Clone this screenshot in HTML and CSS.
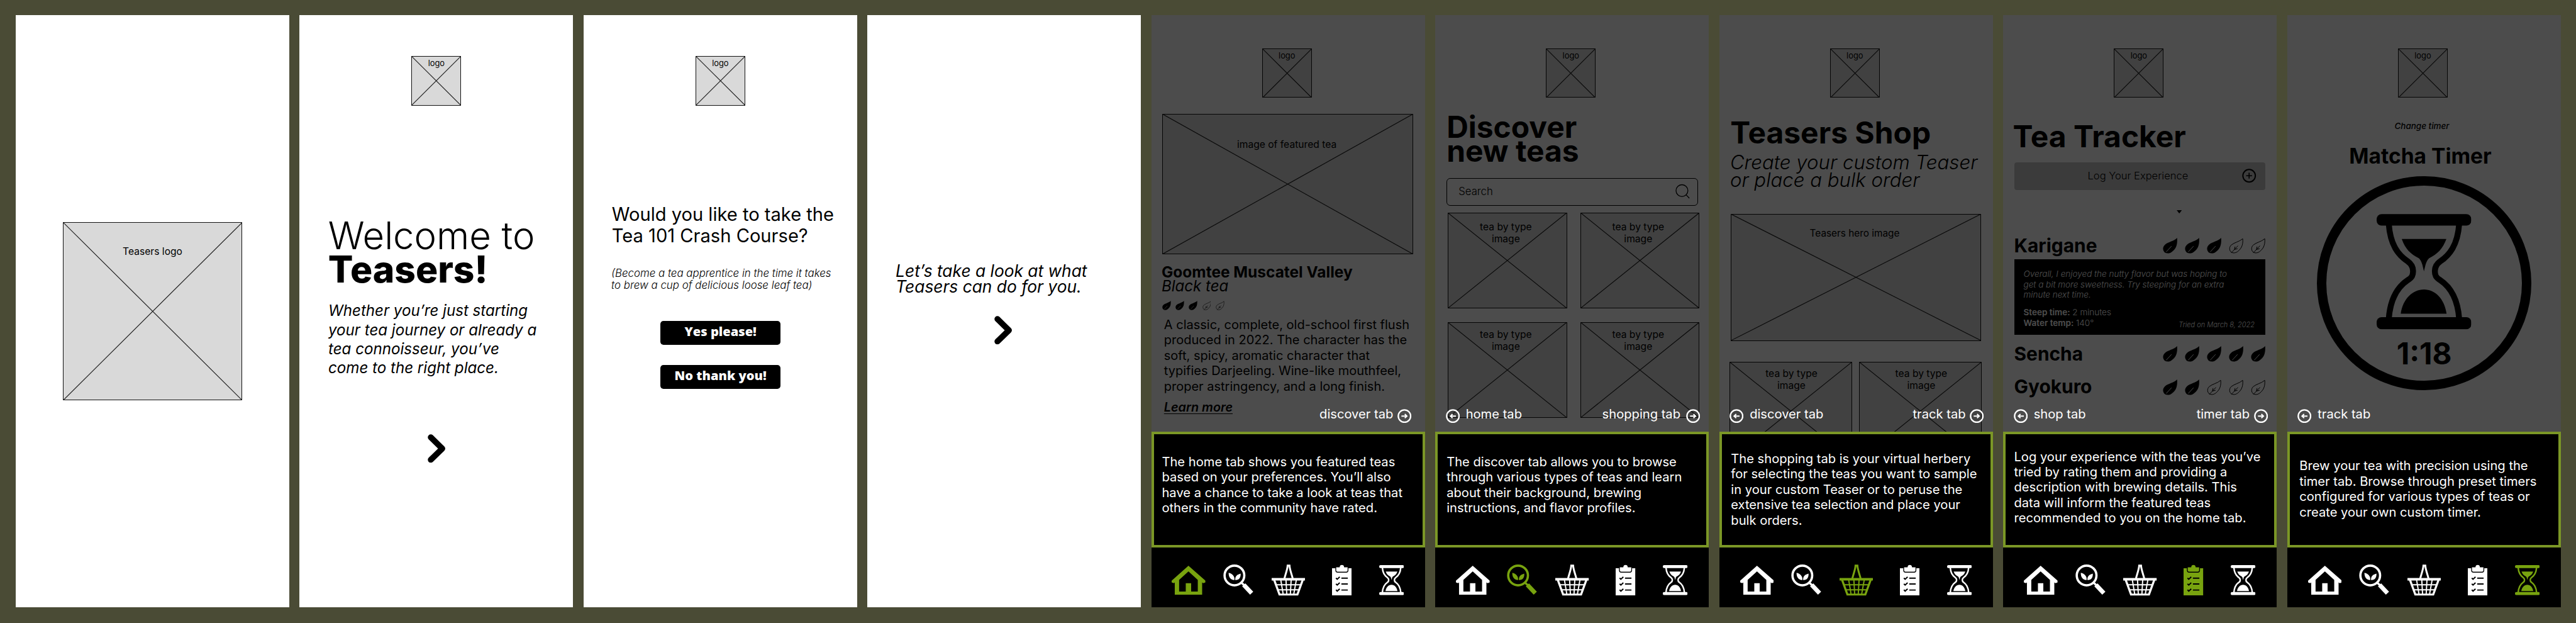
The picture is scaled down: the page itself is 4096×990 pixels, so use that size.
FILE: index.html
```
<!DOCTYPE html>
<html lang="en">
<head>
<meta charset="utf-8">
<title>Teasers onboarding wireframes</title>
<link rel="stylesheet" href="styles.css">
</head>
<body>
<svg class="defs" aria-hidden="true">
  <symbol id="cross" viewBox="0 0 100 100" preserveAspectRatio="none"><path vector-effect="non-scaling-stroke" d="M0 0L100 100M100 0L0 100"/></symbol>
  <symbol id="chevron" viewBox="0 0 29 46"><path d="M5 5L23.5 23L5 41" fill="none" stroke="currentColor" stroke-width="9.5" stroke-linecap="round" stroke-linejoin="round"/></symbol>
  <symbol id="leaf" viewBox="0 0 70 76"><path d="M69 0C71 28 66 48 50 62C38 75 22 77 12 72C-2 62 -2 44 10 33C26 19 52 17 69 0Z" fill="#000"/><path d="M16 68L42 40" stroke="#fff" stroke-width="3"/></symbol>
  <symbol id="leaf-empty" viewBox="0 0 70 76"><path d="M67 4C69 28 64 46 49 60C38 73 23 75 13 70C1 61 1 45 11 35C27 21 51 19 67 4ZM12 72L44 38M27 56L30 42M27 56L42 52" fill="none" stroke="#000" stroke-width="3"/></symbol>
  <symbol id="right" viewBox="0 0 67 67"><g fill="none" stroke="currentColor"><circle cx="33.5" cy="33.5" r="29.5" stroke-width="7"/><path d="M19 33.5H45M35 24L45 33.5L35 43" stroke-width="6"/></g></symbol>
  <symbol id="left" viewBox="0 0 67 67"><g fill="none" stroke="currentColor"><circle cx="33.5" cy="33.5" r="29.5" stroke-width="7"/><path d="M48 33.5H22M32 24L22 33.5L32 43" stroke-width="6"/></g></symbol>
  <symbol id="home" viewBox="0 0 163 142"><path fill="currentColor" fill-rule="evenodd" d="M81 0L163 72V80L152 84L147 80V142H15V80L11 84L0 80V72ZM81 27L36 68V124H68V84H94V124H126V68Z"/></symbol>
  <symbol id="find" viewBox="0 0 147 148"><circle cx="54" cy="53" r="47.5" fill="none" stroke="currentColor" stroke-width="11"/><path d="M87 87L102 101" stroke="currentColor" stroke-width="10"/><path d="M99 98L137 138" stroke="currentColor" stroke-width="21"/><path fill="currentColor" d="M54 75C34 74 26 60 26 40C43 44 52 54 54 66ZM58 75C57 56 66 49 84 44C85 64 76 76 58 75Z"/></symbol>
  <symbol id="basket" viewBox="0 0 162 150"><g fill="none" stroke="currentColor"><path d="M61 70C65 50 76 26 77 5H86C87 26 98 50 102 70" stroke-width="9"/><path d="M0 71H162" stroke-width="12"/><path d="M12 74L38 145H124L150 74" stroke-width="10"/><path d="M22 98H140M30 122H132M44 74L56 146M69 74L73 146M94 74L90 146M119 74L106 146" stroke-width="6"/></g></symbol>
  <symbol id="clip" viewBox="0 0 95 149"><path d="M0 18H95V149H0Z" fill="currentColor"/><path d="M18 12H35C36 -4 59 -4 60 12H77V28Q77 37 68 37H27Q18 37 18 28Z" fill="currentColor" stroke="#000" stroke-width="4"/><path d="M45 66H76M45 94H76M45 123H76M19 65L25 71L37 60M19 93L25 99L37 88M19 122L25 128L37 117" fill="none" stroke="#000" stroke-width="6"/></symbol>
  <symbol id="glass" viewBox="0 0 152 185"><rect width="152" height="18.6" rx="8" fill="currentColor"/><rect y="165.5" width="152" height="19.5" rx="8" fill="currentColor"/><path d="M19.5 16C22 50 35 66 50 76C57 81 58.5 86 58.5 91.5C58.5 98 57 102 50 106C35 116 22 134 19.5 168M132.5 16C130 50 117 66 102 76C95 81 93.5 86 93.5 91.5C93.5 98 95 102 102 106C117 116 130 134 132.5 168" fill="none" stroke="currentColor" stroke-width="9.5"/><path fill="currentColor" d="M40.300 40H112C106 56 98 64 84 71C79 76 78 84 76 92C74 84 73 76 68 71C54 64 46 56 40.300 40ZM38.700 160C42 136 58 121 76 121C94 121 109 136 112.300 160Z"/></symbol>
</svg>

<main class="board">
  <section class="panel splash">
    <div class="ph ph-splash"><svg><use href="#cross"/></svg><span>Teasers logo</span></div>
  </section>

  <section class="panel welcome">
    <div class="ph logo"><svg><use href="#cross"/></svg><span>logo</span></div>
    <h1>Welcome to<br><b>Teasers!</b></h1>
    <p>Whether you’re just starting<br>your tea journey or already a<br>tea connoisseur, you’ve<br>come to the right place.</p>
    <svg class="chevron"><use href="#chevron"/></svg>
  </section>

  <section class="panel course">
    <div class="ph logo"><svg><use href="#cross"/></svg><span>logo</span></div>
    <h2>Would you like to take the<br>Tea 101 Crash Course?</h2>
    <p>(Become a tea apprentice in the time it takes<br>to brew a cup of delicious loose leaf tea)</p>
    <button>Yes please!</button>
    <button>No thank you!</button>
  </section>

  <section class="panel look">
    <p>Let’s take a look at what<br>Teasers can do for you.</p>
    <svg class="chevron"><use href="#chevron"/></svg>
  </section>

  <section class="panel app app-home">
    <div class="screen">
      <div class="ph logo"><svg><use href="#cross"/></svg><span>logo</span></div>
      <div class="ph featured"><svg><use href="#cross"/></svg><span>image of featured tea</span></div>
      <h3 class="tea-name">Goomtee Muscatel Valley<br><i>Black tea</i></h3>
      <div class="leaves small"><svg><use href="#leaf"/></svg><svg><use href="#leaf"/></svg><svg><use href="#leaf"/></svg><svg><use href="#leaf-empty"/></svg><svg><use href="#leaf-empty"/></svg></div>
      <p class="about">A classic, complete, old-school first flush<br>produced in 2022. The character has the<br>soft, spicy, aromatic character that<br>typifies Darjeeling. Wine-like mouthfeel,<br>proper astringency, and a long finish.</p>
      <a class="learn">Learn more</a>
      <div class="shade"></div>
      <div class="hints"><span class="hint next">discover tab<svg><use href="#right"/></svg></span></div>
    </div>
    <div class="tip">The home tab shows you featured teas<br>based on your preferences. You’ll also<br>have a chance to take a look at teas that<br>others in the community have rated.</div>
    <nav><svg class="i-home on"><use href="#home"/></svg><svg class="i-find"><use href="#find"/></svg><svg class="i-basket"><use href="#basket"/></svg><svg class="i-clip"><use href="#clip"/></svg><svg class="i-glass"><use href="#glass"/></svg></nav>
  </section>

  <section class="panel app app-discover">
    <div class="screen">
      <div class="ph logo"><svg><use href="#cross"/></svg><span>logo</span></div>
      <h2 class="title">Discover<br>new teas</h2>
      <div class="search"><span>Search</span><svg viewBox="0 0 70 72"><g fill="none" stroke="#000" stroke-width="4"><circle cx="32" cy="33" r="29"/><path d="M52 53L68 70"/></g></svg></div>
      <div class="tiles">
        <div class="ph"><svg><use href="#cross"/></svg><span>tea by type<br>image</span></div>
        <div class="ph"><svg><use href="#cross"/></svg><span>tea by type<br>image</span></div>
        <div class="ph low"><svg><use href="#cross"/></svg><span>tea by type<br>image</span></div>
        <div class="ph low"><svg><use href="#cross"/></svg><span>tea by type<br>image</span></div>
      </div>
      <div class="shade"></div>
      <div class="hints"><span class="hint prev"><svg><use href="#left"/></svg>home tab</span><span class="hint next">shopping tab<svg><use href="#right"/></svg></span></div>
    </div>
    <div class="tip">The discover tab allows you to browse<br>through various types of teas and learn<br>about their background, brewing<br>instructions, and flavor profiles.</div>
    <nav><svg class="i-home"><use href="#home"/></svg><svg class="i-find on"><use href="#find"/></svg><svg class="i-basket"><use href="#basket"/></svg><svg class="i-clip"><use href="#clip"/></svg><svg class="i-glass"><use href="#glass"/></svg></nav>
  </section>

  <section class="panel app app-shop">
    <div class="screen">
      <div class="ph logo"><svg><use href="#cross"/></svg><span>logo</span></div>
      <h2 class="title">Teasers Shop</h2>
      <p class="sub">Create your custom Teaser<br>or place a bulk order</p>
      <div class="ph hero"><svg><use href="#cross"/></svg><span>Teasers hero image</span></div>
      <div class="tiles">
        <div class="ph"><svg><use href="#cross"/></svg><span>tea by type<br>image</span></div>
        <div class="ph"><svg><use href="#cross"/></svg><span>tea by type<br>image</span></div>
      </div>
      <div class="shade"></div>
      <div class="hints"><span class="hint prev"><svg><use href="#left"/></svg>discover tab</span><span class="hint next">track tab<svg><use href="#right"/></svg></span></div>
    </div>
    <div class="tip">The shopping tab is your virtual herbery<br>for selecting the teas you want to sample<br>in your custom Teaser or to peruse the<br>extensive tea selection and place your<br>bulk orders.</div>
    <nav><svg class="i-home"><use href="#home"/></svg><svg class="i-find"><use href="#find"/></svg><svg class="i-basket on"><use href="#basket"/></svg><svg class="i-clip"><use href="#clip"/></svg><svg class="i-glass"><use href="#glass"/></svg></nav>
  </section>

  <section class="panel app app-track">
    <div class="screen">
      <div class="ph logo"><svg><use href="#cross"/></svg><span>logo</span></div>
      <h2 class="title">Tea Tracker</h2>
      <div class="log"><span>Log Your Experience</span><svg viewBox="0 0 68 68"><g fill="none" stroke="#000"><circle cx="34" cy="34" r="30" stroke-width="6"/><path d="M34 20V48M20 34H48" stroke-width="5"/></g></svg></div>
      <svg class="caret" viewBox="0 0 25 16"><path d="M0 0H25L12.500 16Z"/></svg>
      <div class="row first"><h3>Karigane</h3><div class="leaves"><svg><use href="#leaf"/></svg><svg><use href="#leaf"/></svg><svg><use href="#leaf"/></svg><svg><use href="#leaf-empty"/></svg><svg><use href="#leaf-empty"/></svg></div></div>
      <div class="note">
        <p><i>Overall, I enjoyed the nutty flavor but was hoping to<br>get a bit more sweetness. Try steeping for an extra<br>minute next time.</i></p>
        <div class="brew"><p><b>Steep time:</b> 2 minutes<br><b>Water temp:</b> 140°</p><i class="date">Tried on March 8, 2022</i></div>
      </div>
      <div class="row second"><h3>Sencha</h3><div class="leaves"><svg><use href="#leaf"/></svg><svg><use href="#leaf"/></svg><svg><use href="#leaf"/></svg><svg><use href="#leaf"/></svg><svg><use href="#leaf"/></svg></div></div>
      <div class="row third"><h3>Gyokuro</h3><div class="leaves"><svg><use href="#leaf"/></svg><svg><use href="#leaf"/></svg><svg><use href="#leaf-empty"/></svg><svg><use href="#leaf-empty"/></svg><svg><use href="#leaf-empty"/></svg></div></div>
      <div class="shade"></div>
      <div class="hints"><span class="hint prev"><svg><use href="#left"/></svg>shop tab</span><span class="hint next">timer tab<svg><use href="#right"/></svg></span></div>
    </div>
    <div class="tip">Log your experience with the teas you’ve<br>tried by rating them and providing a<br>description with brewing details. This<br>data will inform the featured teas<br>recommended to you on the home tab.</div>
    <nav><svg class="i-home"><use href="#home"/></svg><svg class="i-find"><use href="#find"/></svg><svg class="i-basket"><use href="#basket"/></svg><svg class="i-clip on"><use href="#clip"/></svg><svg class="i-glass"><use href="#glass"/></svg></nav>
  </section>

  <section class="panel app app-timer">
    <div class="screen">
      <div class="ph logo"><svg><use href="#cross"/></svg><span>logo</span></div>
      <p class="change">Change timer</p>
      <h2 class="matcha">Matcha Timer</h2>
      <div class="dial"><svg><use href="#glass"/></svg><strong>1:18</strong></div>
      <div class="shade"></div>
      <div class="hints"><span class="hint prev"><svg><use href="#left"/></svg>track tab</span></div>
    </div>
    <div class="tip">Brew your tea with precision using the<br>timer tab. Browse through preset timers<br>configured for various types of teas or<br>create your own custom timer.</div>
    <nav><svg class="i-home"><use href="#home"/></svg><svg class="i-find"><use href="#find"/></svg><svg class="i-basket"><use href="#basket"/></svg><svg class="i-clip"><use href="#clip"/></svg><svg class="i-glass on"><use href="#glass"/></svg></nav>
  </section>
</main>
</body>
</html>
```
FILE: styles.css
```
* { box-sizing: border-box; margin: 0; padding: 0; }
html, body { background: #4a4b35; overflow: hidden; }
.defs { position: absolute; width: 0; height: 0; }

.board {
  zoom: 0.99033;
  width: 4136px;
  height: 1000px;
  padding: 24.2px 0 0 24.9px;
  display: flex;
  gap: 16.66px;
  font-family: Inter, "Liberation Sans", sans-serif;
  color: #000;
  white-space: nowrap;
}
.panel {
  width: 439.3px;
  height: 950.4px;
  flex: none;
  display: flex;
  flex-direction: column;
  align-items: flex-start;
  background: #fff;
}
svg { display: block; flex: none; }

/* image placeholders */
.ph {
  position: relative;
  flex: none;
  display: flex;
  justify-content: center;
  align-items: flex-start;
  background: #d9d9d9;
  outline: 1.3px solid #111;
  outline-offset: -1.3px;
  text-align: center;
  font-size: 15.8px;
  line-height: 20px;
}
.ph > svg { position: absolute; inset: 0; width: 100%; height: 100%; stroke: #222; stroke-width: 1.2px; }
.ph > span { position: relative; }
.logo { width: 80px; height: 79.6px; margin: 65.8px 0 0 179.8px; padding-top: 4.3px; font-size: 13px; line-height: 16px; }
.chevron { width: 29px; height: 46px; }

.ph-splash { width: 288.4px; height: 286.4px; margin: 331.8px 0 0 75.8px; padding-top: 38.3px; }

/* welcome */
.welcome h1 { margin: 182.1px 0 0 46px; font-size: 60.4px; line-height: 53.6px; font-weight: 300; }
.welcome h1 b { font-weight: 800; font-size: 59.3px; }
.welcome p { margin: 25.3px 0 0 46.3px; font-size: 24.35px; line-height: 30.4px; font-style: italic; }
.welcome .chevron { margin: 91px 0 0 205.600px; }

/* crash course */
.course h2 { margin: 157.4px 0 0 45.5px; font-size: 29.4px; line-height: 35px; font-weight: 400; }
.course p { margin: 31.8px 0 0 44.8px; font-size: 17.05px; line-height: 20px; font-style: italic; font-weight: 300; }
.course button {
  width: 192.7px;
  height: 38.3px;
  margin: 33px 0 0 123.8px;
  padding-bottom: 3px;
  border: 0;
  border-radius: 5px;
  background: #000;
  color: #fff;
  font: 800 20.3px/35px "Open Sans", sans-serif;
}
.course p + button { margin-top: 45.9px; }

.look p { margin: 397.9px 0 0 45.3px; font-size: 26.6px; line-height: 25.5px; font-style: italic; }
.look .chevron { margin: 33.900px 0 0 203.300px; }

/* dimmed app screens */
.screen {
  position: relative;
  width: 100%;
  height: 668.2px;
  flex: none;
  overflow: hidden;
  display: flex;
  flex-direction: column;
  align-items: flex-start;
}
.screen .logo { margin: 53.1px 0 0 177.6px; }
.shade { position: absolute; inset: 0; background: rgba(0, 0, 0, .7); }
.hints {
  position: absolute;
  left: 16.4px;
  right: 14.2px;
  top: 631.9px;
  display: flex;
  justify-content: space-between;
  color: #fff;
  font-size: 20.35px;
  line-height: 17.1px;
}
.hint { display: flex; align-items: center; height: 22.6px; padding-bottom: 5.4px; }
.hint svg { width: 22.6px; height: 22.6px; margin-bottom: -5.4px; }
.prev svg { margin-right: 9.8px; }
.next { margin-left: auto; }
.next svg { margin-left: 7px; }

.tip {
  width: 100%;
  height: 186.3px;
  flex: none;
  border: 4.500px solid #7b9726;
  background: #000;
  color: #fff;
  font-size: 20.35px;
  line-height: 24.7px;
}
nav {
  width: 100%;
  flex: 1;
  padding: 27.5px 0 0 33px;
  display: flex;
  align-items: flex-start;
  background: #000;
  color: #fff;
}
nav .on { color: #78a30f; }
.i-home { width: 54.3px; height: 47.3px; margin-top: 1.2px; }
.i-find { width: 49px; height: 49.3px; margin-left: 28px; }
.i-basket { width: 54px; height: 50px; margin-left: 28.5px; }
.i-clip { width: 31.7px; height: 49.7px; margin-left: 43px; }
.i-glass { width: 39.7px; height: 48.3px; margin: 1px 0 0 44.2px; }

.leaves { display: flex; gap: 12.05px; }
.leaves svg { width: 23.3px; height: 25.300px; }
.leaves.small { gap: 7.4px; }
.leaves.small svg { width: 14px; height: 15.2px; }
.tiles { display: grid; font-size: 15.9px; }
.tiles .ph { line-height: 18.8px; }
.title { font-size: 48.4px; line-height: 48px; font-weight: 700; }

/* home */
.featured { width: 403px; height: 225.2px; margin: 25.4px 0 0 17.4px; padding: 40px 3px 0 0; }
.tea-name { margin: 18px 0 0 16.4px; font-size: 24.7px; line-height: 22.3px; font-weight: 700; }
.tea-name i { font-weight: 400; font-size: 24.3px; }
.app-home .leaves { margin: 11.8px 0 0 17.4px; }
.about { margin: 10.7px 0 0 20.2px; font-size: 20.2px; line-height: 24.8px; }
.learn { margin: 8.4px 0 0 20.2px; font-size: 20px; line-height: 24.8px; font-style: italic; font-weight: 600; text-decoration: underline; text-decoration-thickness: 1.5px; text-underline-offset: 3px; }
.app-home .hints { right: 21.400px; }
.app-home .tip { padding: 32.4px 0 0 12.8px; }

/* discover */
.app-discover .title { margin: 28px 0 0 18px; line-height: 38.500px; }
.search {
  width: 404px;
  height: 44.7px;
  margin: 23.4px 0 0 17.8px;
  padding: 0 12.5px 1px 18.5px;
  display: flex;
  align-items: center;
  justify-content: space-between;
  border: 1.5px solid #000;
  border-radius: 6px;
  font-size: 16.9px;
  font-weight: 300;
}
.search svg { width: 23px; height: 24px; }
.app-discover .tiles { margin: 11.3px 0 0 20px; grid-template-columns: 191.3px 191px; gap: 22.6px 21.4px; }
.app-discover .ph:not(.logo) { height: 153.4px; padding: 14.3px 5px 0 0; }
.app-discover .low.ph:not(.logo) { padding-top: 11px; }
.app-discover .tip { padding: 32.4px 0 0 14px; }
.app-discover .next svg { margin-left: 9px; }

/* shop */
.app-shop .title { margin: 33.2px 0 0 17.5px; }
.sub { margin: 9.5px 0 0 17.2px; font-size: 31.5px; line-height: 27.6px; font-style: italic; font-weight: 300; }
.hero { width: 402px; height: 203.3px; margin: 40.9px 0 0 18.3px; padding: 21px 4px 0 0; font-size: 15.5px; }
.app-shop .tiles { margin: 33.3px 0 0 16.3px; grid-template-columns: 197px 197px; gap: 11.4px; }
.app-shop .tiles .ph { height: 158px; padding: 10.6px 0 0 2px; }
.app-shop .tip { padding: 27.4px 0 0 14.6px; }

/* tracker */
.app-track .title { margin: 38.8px 0 0 15.3px; }
.log {
  width: 403px;
  height: 43.7px;
  margin: 17.3px 0 0 17.5px;
  padding: 0 14px 1.500px 118px;
  display: flex;
  align-items: center;
  justify-content: space-between;
  border-radius: 4px;
  background: #c6c6c6;
  font-size: 16.7px;
  font-weight: 300;
}
.log svg { width: 22.7px; height: 22.7px; }
.caret { width: 8.500px; height: 5.300px; margin: 32.300px 0 0 278.500px; }
.row { width: 403px; margin-left: 17.3px; display: flex; justify-content: space-between; height: 30px; }
.row h3 { font-size: 30.2px; line-height: 30px; font-weight: 700; }
.row .leaves { padding-top: 2.2px; }
.first { margin-top: 37px; }
.note {
  width: 403px;
  height: 121px;
  margin: 6.7px 0 0 17.5px;
  padding: 15.3px 17px 0 15px;
  background: #000;
  color: #fff;
  font-size: 13.65px;
  line-height: 16.8px;
  font-weight: 300;
}
.note b { font-weight: 600; }
.brew { margin-top: 11.6px; display: flex; justify-content: space-between; align-items: flex-end; }
.date { font-size: 11.1px; margin-bottom: -3.2px; }
.second { margin-top: 16.3px; }
.third { margin-top: 23px; }
.app-track .tip { padding: 24.1px 0 0 13.2px; }

/* timer */
.change, .matcha { width: 100%; text-align: center; }
.change { margin-top: 37.3px; padding-right: 7px; font-size: 13.6px; line-height: 18px; font-style: italic; font-weight: 500; }
.matcha { margin-top: 18.1px; padding-right: 12px; font-size: 33.9px; line-height: 40px; font-weight: 700; }
.dial {
  width: 343.7px;
  height: 343.7px;
  margin: 12.4px 0 0 48px;
  padding-top: 45.8px;
  display: flex;
  flex-direction: column;
  align-items: center;
  border: 15.300px solid #000;
  border-radius: 50%;
}
.dial svg { width: 152px; height: 185.3px; }
.dial strong { margin-top: 12.9px; font-size: 48.1px; line-height: 50px; font-weight: 700; }
.app-timer .tip { padding: 39.1px 0 0 15.500px; }
```
